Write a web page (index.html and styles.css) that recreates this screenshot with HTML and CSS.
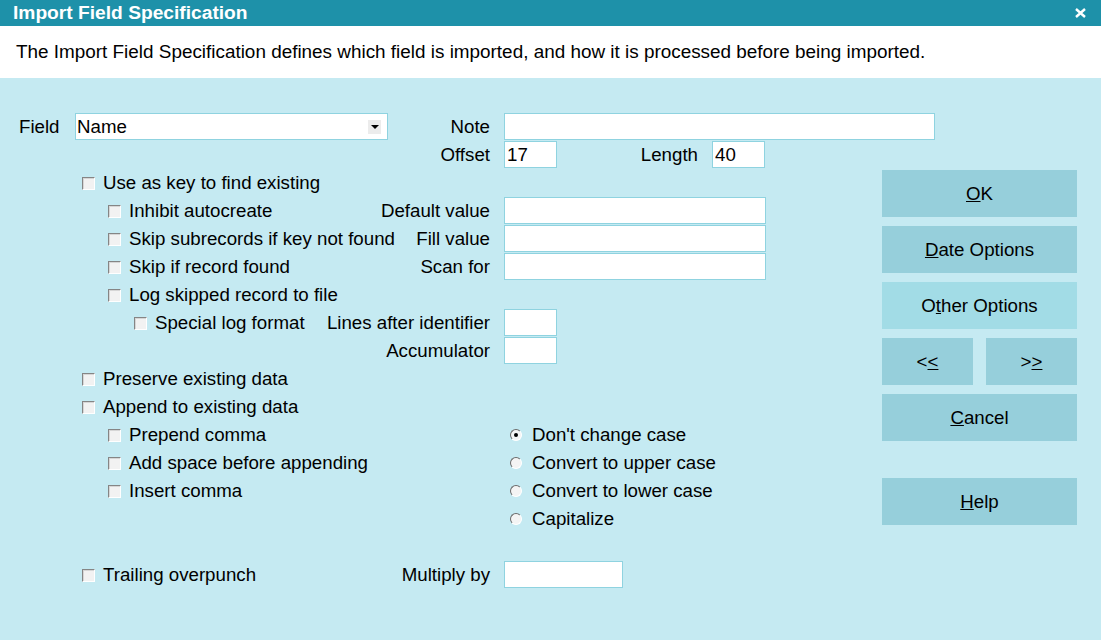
FILE: index.html
```html
<!DOCTYPE html>
<html lang="en">
<head>
  <meta charset="UTF-8">
  <title>Import Field Specification</title>
  <link rel="stylesheet" href="styles.css">
</head>
<body>
  <div class="dialog">
    <div class="titlebar">
      <span class="title">Import Field Specification</span>
      <svg class="close" width="11" height="10" viewBox="0 0 11 10">
        <path d="M1 1 L10 9 M10 1 L1 9" stroke="#fff" stroke-width="2.4"/>
      </svg>
    </div>

    <div class="intro">The Import Field Specification defines which field is imported, and how it is processed before being imported.</div>

    <div class="main">
      <div class="form">
        <div class="row">
          <div class="left">
            <span class="field-label">Field</span>
            <div class="select"><span>Name</span><span class="arrow"></span></div>
            <span class="lbl">Note</span>
          </div>
          <div class="right"><input class="inp w-note" type="text"></div>
        </div>

        <div class="row">
          <div class="left"><span class="lbl">Offset</span></div>
          <div class="right">
            <input class="inp w-small" type="text" value="17">
            <span class="len-lbl">Length</span>
            <input class="inp w-small" type="text" value="40">
          </div>
        </div>

        <div class="row">
          <div class="left lvl1"><span class="cb"></span>Use as key to find existing</div>
          <div class="right"></div>
        </div>

        <div class="row">
          <div class="left lvl2"><span class="cb"></span>Inhibit autocreate<span class="lbl">Default value</span></div>
          <div class="right"><input class="inp w-wide" type="text"></div>
        </div>

        <div class="row">
          <div class="left lvl2"><span class="cb"></span>Skip subrecords if key not found<span class="lbl">Fill value</span></div>
          <div class="right"><input class="inp w-wide" type="text"></div>
        </div>

        <div class="row">
          <div class="left lvl2"><span class="cb"></span>Skip if record found<span class="lbl">Scan for</span></div>
          <div class="right"><input class="inp w-wide" type="text"></div>
        </div>

        <div class="row">
          <div class="left lvl2"><span class="cb"></span>Log skipped record to file</div>
          <div class="right"></div>
        </div>

        <div class="row">
          <div class="left lvl3"><span class="cb"></span>Special log format<span class="lbl">Lines after identifier</span></div>
          <div class="right"><input class="inp w-small" type="text"></div>
        </div>

        <div class="row">
          <div class="left"><span class="lbl">Accumulator</span></div>
          <div class="right"><input class="inp w-small" type="text"></div>
        </div>

        <div class="row">
          <div class="left lvl1"><span class="cb"></span>Preserve existing data</div>
          <div class="right"></div>
        </div>

        <div class="row">
          <div class="left lvl1"><span class="cb"></span>Append to existing data</div>
          <div class="right"></div>
        </div>

        <div class="row">
          <div class="left lvl2"><span class="cb"></span>Prepend comma</div>
          <div class="right"><span class="radio checked"></span>Don't change case</div>
        </div>

        <div class="row">
          <div class="left lvl2"><span class="cb"></span>Add space before appending</div>
          <div class="right"><span class="radio"></span>Convert to upper case</div>
        </div>

        <div class="row">
          <div class="left lvl2"><span class="cb"></span>Insert comma</div>
          <div class="right"><span class="radio"></span>Convert to lower case</div>
        </div>

        <div class="row">
          <div class="left"></div>
          <div class="right"><span class="radio"></span>Capitalize</div>
        </div>

        <div class="row"></div>

        <div class="row">
          <div class="left lvl1"><span class="cb"></span>Trailing overpunch<span class="lbl">Multiply by</span></div>
          <div class="right"><input class="inp w-mult" type="text"></div>
        </div>
      </div>

      <div class="actions">
        <button class="btn"><u>O</u>K</button>
        <button class="btn"><u>D</u>ate Options</button>
        <button class="btn focus">O<u>t</u>her Options</button>
        <div class="nav">
          <button class="btn">&lt;<u>&lt;</u></button>
          <button class="btn">&gt;<u>&gt;</u></button>
        </div>
        <button class="btn"><u>C</u>ancel</button>
        <button class="btn help"><u>H</u>elp</button>
      </div>
    </div>
  </div>
</body>
</html>
```

FILE: styles.css
```css
* { box-sizing: border-box; }

body, html {
  margin: 0;
  padding: 0;
  font-family: 'Liberation Sans', Arial, sans-serif;
  font-size: 18.7px;
  color: #000;
}

.dialog {
  width: 1101px;
  height: 640px;
  background-color: #c5eaf2;
  overflow: hidden;
}

.titlebar {
  height: 26px;
  background-color: #1e91a9;
  color: #fff;
  display: flex;
  align-items: center;
  justify-content: space-between;
  padding: 0 15px 0 13px;
}

.title {
  font-weight: bold;
  font-size: 19.2px;
}

.intro {
  height: 52px;
  background-color: #fff;
  display: flex;
  align-items: center;
  padding-left: 16px;
  font-size: 18.9px;
}

.main {
  display: flex;
  padding-top: 35px;
}

.form {
  width: 882px;
}

.row {
  display: grid;
  grid-template-columns: 490px 1fr;
  height: 28px;
}

.left, .right {
  display: flex;
  align-items: center;
  height: 28px;
  white-space: nowrap;
}

.right {
  padding-left: 14px;
}

.lvl1 { padding-left: 82px; }
.lvl2 { padding-left: 108px; }
.lvl3 { padding-left: 134px; }

.lbl {
  margin-left: auto;
}

.len-lbl {
  width: 155px;
  flex-shrink: 0;
  text-align: right;
  padding-right: 14px;
}

.field-label {
  width: 75px;
  flex-shrink: 0;
  padding-left: 19px;
}

.cb {
  width: 13px;
  height: 13px;
  flex-shrink: 0;
  margin-right: 8px;
  border: 1px solid;
  border-color: #858585 #fff #fff #858585;
  background-color: #f2f2f2;
  box-shadow: inset 1px 1px 0 #d6d6d6;
}

.radio {
  position: relative;
  width: 12px;
  height: 12px;
  flex-shrink: 0;
  margin-left: 6px;
  margin-right: 10px;
  border-radius: 50%;
  border: 1px solid;
  border-color: #6a6a6a #fff #fff #6a6a6a;
  background-color: #f4f4f4;
}

.radio.checked::after {
  content: '';
  position: absolute;
  left: 3px;
  top: 3px;
  width: 4px;
  height: 4px;
  border-radius: 50%;
  background-color: #000;
}

.select {
  width: 313px;
  height: 27px;
  flex-shrink: 0;
  align-self: flex-start;
  background-color: #fff;
  border: 1px solid #8fd3e0;
  display: flex;
  align-items: center;
  justify-content: space-between;
  padding: 0 6px 0 1px;
}

.arrow {
  position: relative;
  width: 13px;
  height: 14px;
  background-color: #ececec;
}

.arrow::after {
  content: '';
  position: absolute;
  left: 3px;
  top: 5px;
  border-left: 4px solid transparent;
  border-right: 4px solid transparent;
  border-top: 4px solid #000;
}

.inp {
  height: 27px;
  flex-shrink: 0;
  align-self: flex-start;
  border: 1px solid #8fd3e0;
  background-color: #fff;
  font-family: inherit;
  font-size: 18.7px;
  padding: 0 2px;
  margin: 0;
  outline: none;
}

.w-small { width: 53px; }
.w-wide { width: 262px; }
.w-note { width: 431px; }
.w-mult { width: 119px; }

.actions {
  width: 195px;
  margin-top: 57px;
  display: flex;
  flex-direction: column;
  gap: 9px;
}

.btn {
  height: 47px;
  width: 100%;
  border: none;
  background-color: #96cfdb;
  font-family: inherit;
  font-size: 18.7px;
  color: #000;
  padding: 0;
}

.btn.focus {
  background-color: #a2dce6;
}

.nav {
  display: flex;
  gap: 13px;
}

.nav .btn {
  width: 91px;
}

.help {
  margin-top: 28px;
}
```
